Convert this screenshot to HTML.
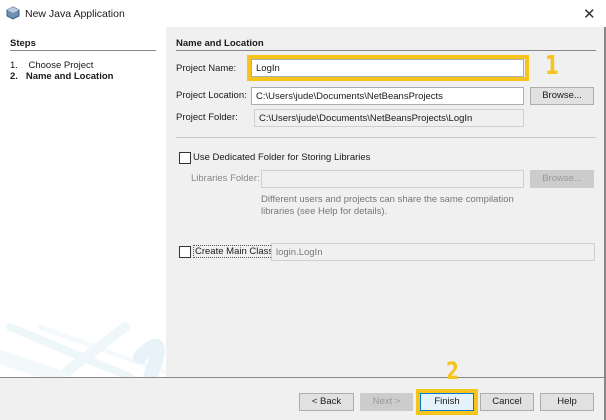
<!DOCTYPE html>
<html><head><style>
*{box-sizing:border-box;margin:0;padding:0}
body{width:606px;height:420px;overflow:hidden;background:#f0f0f0;font-family:"Liberation Sans",Tahoma,sans-serif;font-size:9.5px;color:#1a1a1a;position:relative}
.a{position:absolute;white-space:nowrap}
.fld{position:absolute;background:#fff;border:1px solid #abadb3;height:18px;padding:3px 4px 0;font-size:9.5px;white-space:nowrap;overflow:hidden}
.dis{background:#f0f0f0;border-color:#cfcfcf}
.btn{position:absolute;height:18px;background:#e1e1e1;border:1px solid #adadad;text-align:center;line-height:16px;font-size:9.5px}
.cb{position:absolute;width:12px;height:12px;border:1px solid #333;background:#fff}
.yl{position:absolute;border:4px solid #f6c41a}
.num{position:absolute;color:#f6c41a;font-weight:bold;font-size:26px;font-family:"DejaVu Sans Condensed","DejaVu Sans",sans-serif;transform:scaleX(.85);transform-origin:left top}
</style></head><body>
<div class="a" style="left:0;top:0;width:606px;height:27px;background:#fff"></div>
<svg class="a" style="left:6px;top:6px" width="14" height="14" viewBox="0 0 14 14"><path d="M7 1 L13 4 L13 10 L7 13 L1 10 L1 4Z" fill="#6f8fb5" stroke="#3c5a80"/><path d="M7 1 L13 4 L7 7 L1 4Z" fill="#b8cbe2"/></svg>
<div class="a" style="left:25px;top:8px;font-size:10.5px">New Java Application</div>
<div class="a" style="left:583px;top:5px;font-size:15px;color:#333">✕</div>
<div class="a" style="left:0;top:27px;width:166px;height:350px;background:#fff;overflow:hidden">
<svg width="166" height="350"><g opacity=".18" stroke-linecap="round"><path d="M10 300 L130 350" stroke="#9fd0e3" stroke-width="8"/><path d="M40 300 L165 345" stroke="#c7e6f0" stroke-width="5"/><path d="M125 300 L60 350" stroke="#a9d6e7" stroke-width="10"/><path d="M0 330 L60 350" stroke="#bfe0ec" stroke-width="14"/><path d="M140 330 Q170 300 150 350" stroke="#7fc1da" stroke-width="14" fill="none"/></g></svg></div>
<div class="a" style="left:604px;top:27px;width:2px;height:393px;background:#888"></div>
<div class="a" style="left:10px;top:38px;font-weight:bold">Steps</div>
<div class="a" style="left:10px;top:50px;width:146px;height:1px;background:#888"></div>
<div class="a" style="left:10px;top:60px">1.&nbsp;&nbsp;&nbsp;&nbsp;Choose Project</div>
<div class="a" style="left:10px;top:71px;font-weight:bold">2.&nbsp;&nbsp;&nbsp;Name and Location</div>
<div class="a" style="left:176px;top:38px;font-weight:bold">Name and Location</div>
<div class="a" style="left:176px;top:50px;width:420px;height:1px;background:#888"></div>
<div class="a" style="left:176px;top:63px">Project Name:</div>
<div class="fld" style="left:251px;top:59px;width:273px">LogIn</div>
<div class="yl" style="left:247px;top:55px;width:282px;height:26px"></div>
<div class="num" style="left:545px;top:51px">1</div>
<div class="a" style="left:176px;top:90px">Project Location:</div>
<div class="fld" style="left:251px;top:87px;width:273px">C:\Users\jude\Documents\NetBeansProjects</div>
<div class="btn" style="left:530px;top:87px;width:64px">Browse...</div>
<div class="a" style="left:176px;top:112px">Project Folder:</div>
<div class="fld dis" style="left:254px;top:109px;width:270px;color:#1a1a1a">C:\Users\jude\Documents\NetBeansProjects\LogIn</div>
<div class="a" style="left:176px;top:137px;width:420px;height:1px;background:#c8c8c8"></div>
<div class="cb" style="left:179px;top:152px"></div>
<div class="a" style="left:193px;top:152px">Use Dedicated Folder for Storing Libraries</div>
<div class="a" style="left:191px;top:173px;color:#888">Libraries Folder:</div>
<div class="fld dis" style="left:261px;top:170px;width:263px"></div>
<div class="btn" style="left:530px;top:170px;width:64px;color:#999;background:#ccc;border-color:#ccc">Browse...</div>
<div class="a" style="left:261px;top:194px;color:#777;line-height:12px">Different users and projects can share the same compilation<br>libraries (see Help for details).</div>
<div class="cb" style="left:179px;top:246px"></div>
<div class="a" style="left:193px;top:245px;border:1px dotted #555;padding:0 1px;height:13px;line-height:11px">Create Main Class</div>
<div class="fld dis" style="left:271px;top:243px;width:324px;color:#777">login.LogIn</div>
<div class="a" style="left:0;top:377px;width:604px;height:1px;background:#888"></div>
<div class="btn" style="left:299px;top:393px;width:55px">&lt; Back</div>
<div class="btn" style="left:360px;top:393px;width:53px;color:#999;background:#ccc;border-color:#ccc">Next &gt;</div>
<div class="btn" style="left:420px;top:393px;width:54px;background:#e5f1fb;border-color:#0078d7">Finish</div>
<div class="yl" style="left:416px;top:389px;width:62px;height:26px"></div>
<div class="num" style="left:446px;top:357px;font-size:24px">2</div>
<div class="btn" style="left:480px;top:393px;width:54px">Cancel</div>
<div class="btn" style="left:540px;top:393px;width:54px">Help</div>
</body></html>
